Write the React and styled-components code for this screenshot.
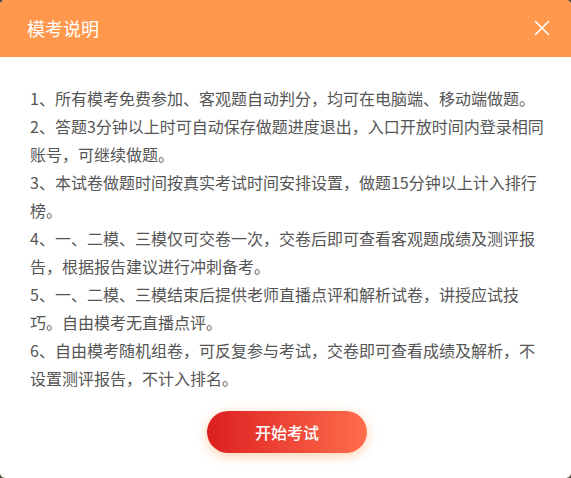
import React from 'react';
import styled, { createGlobalStyle } from 'styled-components';

const GlobalStyle = createGlobalStyle`
  html, body {
    margin: 0;
    padding: 0;
    background: #4a4636;
  }
  body {
    font-family: "Noto Sans CJK SC", "Noto Sans", sans-serif;
  }
`;

const Modal = styled.div`
  width: 571px;
  height: 478px;
  background: #fff;
  border-radius: 5px;
  overflow: hidden;
  display: flex;
  flex-direction: column;
`;

const Header = styled.div`
  height: 57px;
  flex-shrink: 0;
  background: #ff984c;
  display: flex;
  align-items: center;
  justify-content: space-between;
  padding: 0 21px 0 27px;
  box-sizing: border-box;
`;

const Title = styled.h2`
  margin: 0;
  font-size: 18px;
  font-weight: 400;
  color: #fff;
  line-height: 1;
  padding-bottom: 2px;
`;

const CloseButton = styled.button`
  width: 16px;
  height: 16px;
  padding: 0;
  border: none;
  background: none;
  display: flex;
  cursor: pointer;
  margin-bottom: 2px;
`;

const Body = styled.div`
  padding: 27px 22px 0 30px;
`;

const Item = styled.p`
  margin: 0;
  font-size: 16px;
  line-height: 28px;
  color: #555;
`;

const Footer = styled.div`
  display: flex;
  justify-content: center;
  padding: 19px 0 0 3px;
`;

const StartButton = styled.button`
  width: 160px;
  height: 42px;
  border: none;
  border-radius: 21px;
  background: linear-gradient(90deg, #dc1f20 0%, #ff6e4d 100%);
  box-shadow: 0 3px 12px rgba(255, 150, 70, 0.45);
  color: #fff;
  font-family: inherit;
  font-size: 16px;
  font-weight: 500;
  cursor: pointer;
`;

const rules = [
  '1、所有模考免费参加、客观题自动判分，均可在电脑端、移动端做题。',
  '2、答题3分钟以上时可自动保存做题进度退出，入口开放时间内登录相同账号，可继续做题。',
  '3、本试卷做题时间按真实考试时间安排设置，做题15分钟以上计入排行榜。',
  '4、一、二模、三模仅可交卷一次，交卷后即可查看客观题成绩及测评报告，根据报告建议进行冲刺备考。',
  '5、一、二模、三模结束后提供老师直播点评和解析试卷，讲授应试技巧。自由模考无直播点评。',
  '6、自由模考随机组卷，可反复参与考试，交卷即可查看成绩及解析，不设置测评报告，不计入排名。',
];

export default function App() {
  return (
    <>
      <GlobalStyle />
      <Modal>
        <Header>
          <Title>模考说明</Title>
          <CloseButton aria-label="关闭">
            <svg width="16" height="16" viewBox="0 0 16 16">
              <path d="M1 1 L15 15 M15 1 L1 15" stroke="#fff" strokeWidth="1.5" fill="none" />
            </svg>
          </CloseButton>
        </Header>
        <Body>
          {rules.map((text) => (
            <Item key={text}>{text}</Item>
          ))}
        </Body>
        <Footer>
          <StartButton>开始考试</StartButton>
        </Footer>
      </Modal>
    </>
  );
}
